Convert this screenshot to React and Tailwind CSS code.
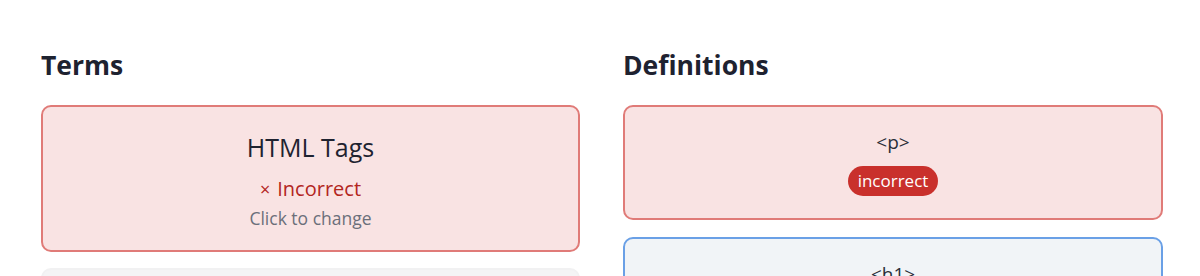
export default function App() {
  const font = { fontFamily: '"Open Sans", "Noto Sans", sans-serif' };
  return (
    <div className="w-[1200px] h-[276px] overflow-hidden bg-white" style={font}>
      <div className="flex gap-[43px] pl-[41px] pt-[48px]">
        <div className="w-[539px] flex flex-col">
          <h2 className="text-[26.5px] leading-[34px] font-bold text-[#1e2230] mb-[23px]">Terms</h2>
          <div className="flex flex-col gap-[16px]">
            <div className="rounded-[10px] border-2 border-[#e07b78] bg-[#f9e3e3] pt-[24px] pb-[20px] flex flex-col items-center">
              <div className="text-[25px] leading-[32px] font-medium text-[#1f2330]">HTML Tags</div>
              <div className="mt-[12px] text-[20px] leading-[28px] font-medium text-[#b3261e] flex items-center gap-[7px]">
                <span className="text-[18px]">×</span>
                <span>Incorrect</span>
              </div>
              <div className="mt-[3px] text-[17.5px] leading-[24px] text-[#6b6f7a]">Click to change</div>
            </div>
            <div className="rounded-[10px] border-2 border-[#f1f1f2] bg-[#f4f4f5] h-[120px]"></div>
          </div>
        </div>
        <div className="w-[540px] flex flex-col">
          <h2 className="text-[26.5px] leading-[34px] font-bold text-[#1e2230] mb-[23px]">Definitions</h2>
          <div className="flex flex-col gap-[17px]">
            <div className="rounded-[10px] border-2 border-[#e07b78] bg-[#f9e3e3] pt-[21px] pb-[22px] flex flex-col items-center">
              <div className="text-[19px] leading-[28px] text-[#2a2e38]">&lt;p&gt;</div>
              <div className="mt-[10px] h-[30px] px-[10px] rounded-full bg-[#c9302c] text-white text-[17px] leading-[30px]">incorrect</div>
            </div>
            <div className="rounded-[10px] border-2 border-[#6aa0e6] bg-[#f1f4f7] pt-[21px] pb-[22px] flex flex-col items-center">
              <div className="text-[19px] leading-[28px] text-[#2a2e38]">&lt;h1&gt;</div>
              <div className="h-[60px]"></div>
            </div>
          </div>
        </div>
      </div>
    </div>
  );
}
